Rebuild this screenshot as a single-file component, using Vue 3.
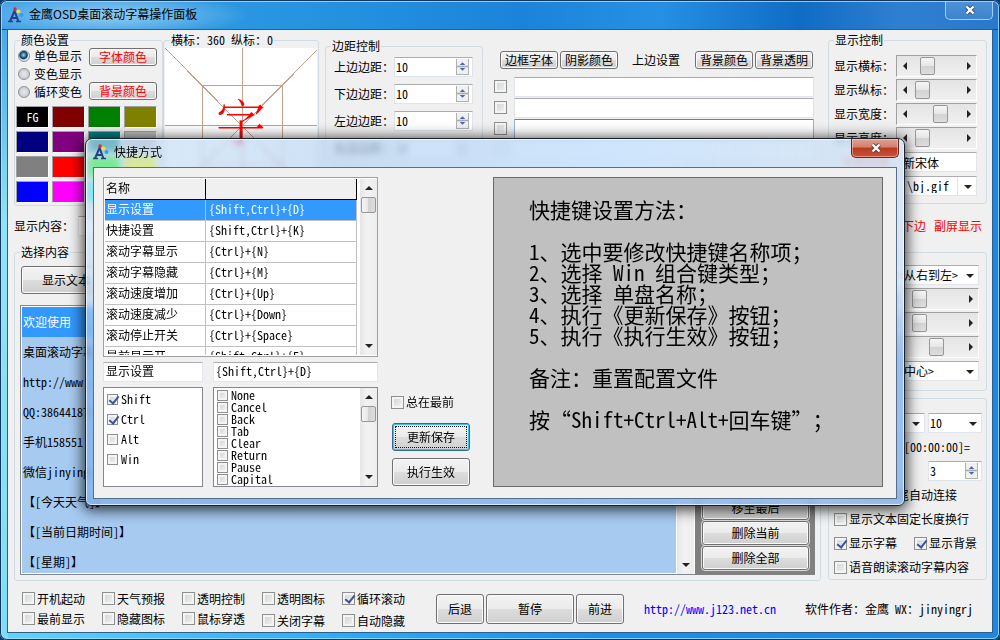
<script setup>
import { ref } from 'vue'

const swatches = [
  '#000000', '#800000', '#008000', '#808000',
  '#000080', '#800080', '#008080', '#c0c0c0',
  '#808080', '#ff0000', '#00ff00', '#ffff00',
  '#0000ff', '#ff00ff', '#00ffff', '#ffffff',
]
const colorMode = ref('单色显示')
const colorModes = ['单色显示', '变色显示', '循环变色']
const margins = ['上边边距：', '下边边距：', '左边边距：', '右边边距：']
const sliders = [
  { label: '显示横标：', value: 6 },
  { label: '显示纵标：', value: 1 },
  { label: '显示宽度：', value: 19 },
  { label: '显示高度：', value: 1 },
]
const speeds = [
  { label: '滚动速度', value: 8 },
  { label: '滚动间隔', value: 8 },
  { label: '停留时间', value: 25 },
]
const lines = [
  '欢迎使用', '桌面滚动字幕', 'http://www.j123.net.cn', 'QQ:386441871', '手机158551',
  '微信jinyingrj', '【[今天天气]】', '【[当前日期时间]】', '【[星期]】',
]
const options = [
  [['开机起动', false], ['最前显示', false]],
  [['天气预报', false], ['隐藏图标', false]],
  [['透明控制', false], ['鼠标穿透', false]],
  [['透明图标', false], ['关闭字幕', false]],
  [['循环滚动', true], ['自动隐藏', false]],
]
const shortcuts = [
  ['显示设置', '{Shift,Ctrl}+{D}'],
  ['快捷设置', '{Shift,Ctrl}+{K}'],
  ['滚动字幕显示', '{Ctrl}+{N}'],
  ['滚动字幕隐藏', '{Ctrl}+{M}'],
  ['滚动速度增加', '{Ctrl}+{Up}'],
  ['滚动速度减少', '{Ctrl}+{Down}'],
  ['滚动停止开关', '{Ctrl}+{Space}'],
  ['最前显示开', '{Shift,Ctrl}+{E}'],
]
const modifiers = [['Shift', true], ['Ctrl', true], ['Alt', false], ['Win', false]]
const keys = ['None', 'Cancel', 'Back', 'Tab', 'Clear', 'Return', 'Pause', 'Capital']
const guide = `快捷键设置方法：

1、选中要修改快捷键名称项；
2、选择 Win 组合键类型；
3、选择 单盘名称；
4、执行《更新保存》按钮；
5、执行《执行生效》按钮；

备注：重置配置文件

按“Shift+Ctrl+Alt+回车键”；`
</script>

<template>
  <main class="window">
    <header class="titlebar">
      <svg class="logo" viewBox="0 0 16 16" aria-hidden="true">
        <path d="M2 14.500 L6.500 4 L10.500 14.500 M4 11 H9" fill="none" stroke="#27408b" stroke-width="2" />
        <path d="M0 14.500 H5 M8 14.500 H13" stroke="#27408b" stroke-width="1.500" />
        <circle cx="7" cy="2" r="1.700" fill="#e8262a" />
        <circle cx="10.500" cy="4.500" r="2" fill="#ffe21a" />
        <circle cx="13.500" cy="8" r="2" fill="#3a9af0" />
      </svg>
      <h1>金鹰OSD桌面滚动字幕操作面板</h1>
      <button class="close" aria-label="关闭">
        <svg viewBox="0 0 12 10"><path d="M2.500 1.500 L9.500 8.500 M9.500 1.500 L2.500 8.500" stroke="#35506e" stroke-width="4" /><path d="M2.500 1.500 L9.500 8.500 M9.500 1.500 L2.500 8.500" stroke="#fff" stroke-width="2.400" /></svg>
      </button>
    </header>

    <div class="client">
      <div class="upper">
        <div class="left">
          <div class="top">
            <fieldset class="colors">
              <legend>颜色设置</legend>
              <div class="modes">
                <div>
                  <label v-for="m in colorModes" :key="m" class="radio">
                    <input v-model="colorMode" type="radio" name="mode" :value="m">{{ m }}
                  </label>
                </div>
                <div class="mode-buttons">
                  <button class="btn red">字体颜色</button>
                  <button class="btn red">背景颜色</button>
                </div>
              </div>
              <div class="swatches">
                <button v-for="(c, i) in swatches" :key="c" :style="{ backgroundColor: c }" :aria-label="c">{{ i ? '' : 'FG' }}</button>
              </div>
            </fieldset>

            <fieldset class="preview">
              <legend>横标：360 纵标：0</legend>
              <svg viewBox="0 0 152 154">
                <rect width="152" height="154" fill="#fff" />
                <g fill="none" stroke="#c8a08c" shape-rendering="crispEdges">
                  <path d="M77.500 0V154M0 77.500H152M0 0L152 154M152 2L2 154" />
                  <rect x="37.500" y="37.500" width="80" height="80" />
                </g>
                <text x="76" y="93" text-anchor="middle">字</text>
              </svg>
            </fieldset>

            <fieldset class="margins">
              <legend>边距控制</legend>
              <label v-for="m in margins" :key="m">{{ m }}
                <span class="spin"><input value="10"><i><svg viewBox="0 0 14 16"><path d="M7 2.500l3.500 3.500h-7zM7 13.500l3.500-3.500h-7z" fill="#4a66b4" /><path d="M0 8H14" stroke="#aaa" stroke-width="2" /></svg></i></span>
              </label>
            </fieldset>

            <section class="borders">
              <div class="border-head">
                <button class="btn">边框字体</button><button class="btn">阴影颜色</button>
                <span>上边设置</span>
                <button class="btn">背景颜色</button><button class="btn">背景透明</button>
              </div>
              <div v-for="n in 4" :key="n" class="border-row">
                <input type="checkbox" :aria-label="'边框' + n">
                <input class="field" :class="{ focus: n === 3 }" :aria-label="'文字' + n">
              </div>
            </section>
          </div>

          <label class="content-row">显示内容：<input class="field"></label>

          <fieldset class="chooser">
            <legend>选择内容</legend>
            <button class="btn text-btn">显示文本</button>
            <div class="list-wrap">
              <ul class="lines">
                <li v-for="(l, i) in lines" :key="l" :class="{ on: i === 0 }">{{ l }}</li>
              </ul>
              <div class="vbar">
                <svg viewBox="0 0 8 4"><path d="M0 4L4 0L8 4z" /></svg><i></i>
                <svg viewBox="0 0 8 4"><path d="M0 0L4 4L8 0z" /></svg>
              </div>
              <div class="list-actions">
                <button class="btn">移至最后</button>
                <button class="btn">删除当前</button>
                <button class="btn">删除全部</button>
              </div>
            </div>
          </fieldset>
        </div>

        <aside class="right">
          <fieldset class="display">
            <legend>显示控制</legend>
            <label v-for="s in sliders" :key="s.label" class="row">{{ s.label }}
              <span class="hbar">
                <svg viewBox="0 0 4 8"><path d="M4 0L0 4L4 8z" /></svg>
                <input type="range" min="0" max="30" :value="s.value">
                <svg viewBox="0 0 4 8"><path d="M0 0L4 4L0 8z" /></svg>
              </span>
            </label>
            <label class="row wide"><span class="red">字体名称</span><input class="field" value="新宋体"></label>
            <label class="row wide">背景图片
              <span class="combo split"><select><option>\bj.gif</option></select><svg viewBox="0 0 8 4"><path d="M0 0L4 4L8 0z" /></svg></span>
            </label>
          </fieldset>
          <p class="screens"><span>下边</span><span>副屏显示</span></p>
          <fieldset class="motion">
            <label class="row">方向
              <span class="combo"><select><option>&lt;从右到左&gt;</option></select><svg viewBox="0 0 8 4"><path d="M0 0L4 4L8 0z" /></svg></span>
            </label>
            <label v-for="s in speeds" :key="s.label" class="row">{{ s.label }}
              <span class="hbar grow">
                <svg viewBox="0 0 4 8"><path d="M4 0L0 4L4 8z" /></svg>
                <input type="range" min="0" max="42" :value="s.value">
                <svg viewBox="0 0 4 8"><path d="M0 0L4 4L0 8z" /></svg>
              </span>
            </label>
            <label class="row">位置
              <span class="combo center"><select><option>&lt;中心&gt;</option></select><svg viewBox="0 0 8 4"><path d="M0 0L4 4L8 0z" /></svg></span>
            </label>
          </fieldset>
          <fieldset class="timing">
            <div class="row end">
              <span class="combo first"><select aria-label="单位"><option></option></select><svg viewBox="0 0 8 4"><path d="M0 0L4 4L8 0z" /></svg></span>
              <span class="combo num"><select aria-label="字号"><option>10</option></select><svg viewBox="0 0 8 4"><path d="M0 0L4 4L8 0z" /></svg></span>
            </div>
            <div class="row end time">[00:00:00]=</div>
            <div class="row end">
              <span class="spin small"><input value="3" aria-label="次数"><i><svg viewBox="0 0 14 16"><path d="M7 2.500l3.500 3.500h-7zM7 13.500l3.500-3.500h-7z" fill="#4a66b4" /><path d="M0 8H14" stroke="#aaa" stroke-width="2" /></svg></i></span>
            </div>
            <label class="row check"><input type="checkbox">字幕的首尾自动连接</label>
            <label class="row check"><input type="checkbox">显示文本固定长度换行</label>
            <div class="row pair">
              <label class="check"><input type="checkbox" checked>显示字幕</label>
              <label class="check"><input type="checkbox" checked>显示背景</label>
            </div>
            <label class="row check"><input type="checkbox">语音朗读滚动字幕内容</label>
          </fieldset>
        </aside>
      </div>

      <footer>
        <div class="options">
          <div v-for="(col, i) in options" :key="i" :class="{ loose: i > 2 }">
            <label v-for="o in col" :key="o[0]" class="check"><input type="checkbox" :checked="o[1]">{{ o[0] }}</label>
          </div>
        </div>
        <div class="player">
          <button class="btn">后退</button><button class="btn big">暂停</button><button class="btn">前进</button>
        </div>
        <a href="http://www.j123.net.cn">http://www.j123.net.cn</a>
        <span class="author">软件作者：金鹰 WX：jinyingrj</span>
      </footer>
    </div>

    <section class="dialog" role="dialog" aria-label="快捷方式">
      <header>
        <svg class="logo" viewBox="0 0 16 16" aria-hidden="true">
          <path d="M2 14.500 L6.500 4 L10.500 14.500 M4 11 H9" fill="none" stroke="#27408b" stroke-width="2" />
          <path d="M0 14.500 H5 M8 14.500 H13" stroke="#27408b" stroke-width="1.500" />
          <circle cx="7" cy="2" r="1.700" fill="#e8262a" />
          <circle cx="10.500" cy="4.500" r="2" fill="#ffe21a" />
          <circle cx="13.500" cy="8" r="2" fill="#3a9af0" />
        </svg>
        <h2>快捷方式</h2>
        <button class="close hot" aria-label="关闭">
          <svg viewBox="0 0 12 10"><path d="M2.500 1.500 L9.500 8.500 M9.500 1.500 L2.500 8.500" stroke="#5c3a3a" stroke-width="4" /><path d="M2.500 1.500 L9.500 8.500 M9.500 1.500 L2.500 8.500" stroke="#fff" stroke-width="2.400" /></svg>
        </button>
      </header>
      <div class="dialog-body">
        <div class="keys">
          <div class="grid-box">
            <div class="table-clip">
              <table>
                <thead><tr><th>名称</th><th></th></tr></thead>
                <tbody>
                  <tr v-for="(s, i) in shortcuts" :key="s[0]" :class="{ on: i === 0 }"><td>{{ s[0] }}</td><td>{{ s[1] }}</td></tr>
                </tbody>
              </table>
            </div>
            <div class="vbar">
              <svg viewBox="0 0 8 4"><path d="M0 4L4 0L8 4z" /></svg><i></i>
              <svg viewBox="0 0 8 4"><path d="M0 0L4 4L8 0z" /></svg>
            </div>
          </div>
          <div class="pair-row">
            <input class="field" value="显示设置" aria-label="名称">
            <input class="field" value="{Shift,Ctrl}+{D}" aria-label="快捷键">
          </div>
          <div class="pair-row lists">
            <div class="box mods">
              <label v-for="m in modifiers" :key="m[0]" class="check"><input type="checkbox" :checked="m[1]">{{ m[0] }}</label>
            </div>
            <div class="box">
              <div class="keylist">
                <label v-for="k in keys" :key="k" class="check"><input type="checkbox">{{ k }}</label>
              </div>
              <div class="vbar">
                <svg viewBox="0 0 8 4"><path d="M0 4L4 0L8 4z" /></svg><i></i>
                <svg viewBox="0 0 8 4"><path d="M0 0L4 4L8 0z" /></svg>
              </div>
            </div>
          </div>
        </div>
        <div class="commands">
          <label class="check"><input type="checkbox">总在最前</label>
          <button class="btn default">更新保存</button>
          <button class="btn">执行生效</button>
        </div>
        <div class="guide">{{ guide }}</div>
      </div>
    </section>
  </main>
</template>

<style>
body { margin: 0; background: #0a3a6e; }
</style>

<style scoped>
* { box-sizing: border-box; }
.window {
  position: relative;
  display: flex;
  flex-direction: column;
  min-height: 100vh;
  padding: 0 8px 8px;
  border-radius: 7px;
  background:
    linear-gradient(#4aa8e8, #8fe3f5 30%, #7fdcf6) 0 30px / 8px 100% no-repeat,
    linear-gradient(90deg, #62d4fa, #2aaaf8 35%, #1a90ee 60%, #1c86e4);
  font: 12px/14px "Noto Sans Mono CJK SC", "Liberation Mono", "Noto Sans CJK SC", monospace;
  color: #000;
  white-space: nowrap;
}
.window::after {
  content: "";
  position: absolute;
  inset: 0;
  border-radius: 7px;
  box-shadow: inset 0 0 0 1px #12385e, inset 0 0 0 2px rgba(170, 222, 250, .8);
  pointer-events: none;
}
button, input, select { font: inherit; color: inherit; margin: 0; }
.titlebar {
  display: flex;
  align-items: center;
  height: 30px;
  margin: 0 -8px;
  padding-left: 8px;
  border-radius: 7px 7px 0 0;
  border-bottom: 1px solid #1f4a72;
  background:
    radial-gradient(ellipse 140px 22px at 110px 15px, rgba(200, 232, 250, .65), transparent),
    linear-gradient(90deg, #3c9fe6, #2694e0 30%, #1b84da 52%, #2590e4 66%, #0f6cc4 80%, #2f7fd0 90%, #2a78cc);
}
.logo { width: 16px; height: 16px; flex: none; }
h1, h2 { margin: 0 0 0 5px; font: 12px/16px "Noto Sans CJK SC", sans-serif; }
h1 { padding-bottom: 1px; }
.close {
  align-self: flex-start;
  display: grid;
  place-items: center;
  width: 48px;
  height: 20px;
  margin-left: auto;
  margin-right: 7px;
  padding: 0 0 0 2px;
  border: 1px solid #a8cdf0;
  border-top: 0;
  border-radius: 0 0 5px 5px;
  background: linear-gradient(#4f93d8, #3c84d0);
}
.close svg { width: 12px; height: 10px; }
.close.hot {
  height: 19px;
  margin-right: -2px;
  border-color: #5c2a28;
  background: linear-gradient(#e0a090, #d4806c 45%, #b83a20 50%, #cc5038);
  box-shadow: inset 0 0 0 1px rgba(255, 220, 210, .5);
}
.client {
  flex: 1;
  display: flex;
  flex-direction: column;
  background: #f0f0f0;
  padding: 3px 5px 0 6px;
  box-shadow: 0 0 0 1px #2c5f8c;
}
.upper { flex: 1; display: flex; gap: 7px; }
.left { flex: 1; min-width: 0; display: flex; flex-direction: column; }
.right { flex: none; width: 159px; }
fieldset {
  min-width: 0;
  margin: 0;
  padding: 0;
  border: 1px solid #d0dce4;
  border-radius: 3px;
}
legend { margin-left: 5px; padding: 0 1px; height: 14px; }
.top { display: flex; align-items: flex-start; }
.colors { width: 149px; padding: 0 5px 2px 1px; }
.colors legend { margin-left: 4px; }
.modes { display: flex; justify-content: space-between; }
.radio { display: flex; align-items: center; gap: 4px; height: 18px; padding-left: 2px; }
.radio input {
  appearance: none;
  width: 12px;
  height: 12px;
  border: 1px solid #8e8f8f;
  border-radius: 50%;
  background: radial-gradient(#e8eaee, #c8ccd2 70%);
}
.radio input:checked { background: radial-gradient(circle at 45% 40%, #8fdcf4 0, #1a5f8c 35%, #103048 45%, #dfe6ea 60%); }
.mode-buttons { display: flex; flex-direction: column; justify-content: space-between; padding: 1px 0; width: 68px; }
.btn {
  height: 18px;
  padding: 0;
  border: 1px solid #707070;
  border-radius: 3px;
  background: linear-gradient(#f3f3f3, #ebebeb 49%, #dddddd 50%, #cfcfcf);
  box-shadow: inset 0 0 0 1px #fbfbfb;
  line-height: 14px;
}
.red { color: #f00; }
.swatches { display: grid; grid-template-columns: repeat(4, 1fr); gap: 3px; margin-top: 5px; }
.swatches button {
  height: 22px;
  padding: 0;
  border: 1px solid;
  border-color: #a0a0a0 #fff #fff #a0a0a0;
  color: #fff;
  line-height: 18px;
}
.preview { width: 156px; padding: 1px 1px 1px; }
.preview svg { display: block; width: 100%; height: 154px; }
.preview text { font-size: 50px; font-weight: 300; font-family: "Noto Serif CJK SC", "Noto Sans CJK SC", serif; fill: #f00; }
.margins { width: 158px; margin: 6px 0 0 6px; }
.margins label { display: flex; align-items: center; height: 27px; padding-left: 8px; }
.spin { display: flex; align-items: center; width: 80px; height: 20px; padding-right: 3px; border: 1px solid #dde4ec; border-top-color: #abadb3; background: #fff; }
.margins .spin { margin: 0 9px 0 auto; }
.spin input { flex: 1; width: 0; padding: 0 1px 1px; border: 0; outline: 0; background: none; height: 16px; }
.spin i { width: 13px; height: 16px; border: 1px solid #b0b0b0; border-top: 0; background: #f0f0f0; display: flex; }
.borders { flex: 1; min-width: 0; padding: 18px 7px 0 11px; }
.border-head { display: flex; gap: 2px; padding-left: 6px; margin-bottom: 8px; }
.border-head .btn { width: 58px; }
.border-head span { margin: 2px 13px 0 12px; }
.border-row { display: flex; gap: 7px; height: 21px; align-items: flex-start; }
.border-row input[type=checkbox] { margin-top: 3px; }
.field {
  flex: 1;
  width: 0;
  height: 20px;
  padding: 0 2px;
  border: 1px solid #e2e5ee;
  border-top-color: #abadb3;
  background: #fff;
  outline: 0;
  border-radius: 1px;
}
.field.focus { border-color: #8fb8dc; border-top-color: #4a88c0; }
input[type=checkbox] {
  appearance: none;
  flex: none;
  position: relative;
  width: 13px;
  height: 13px;
  border: 1px solid #8e8f8f;
  background: linear-gradient(135deg, #cdd2d8, #f4f4f4);
  box-shadow: inset 0 0 0 2px #f4f4f4;
}
input[type=checkbox]:checked::after {
  content: "";
  position: absolute;
  left: 4px;
  top: 0;
  width: 4px;
  height: 8px;
  border: solid #3c549c;
  border-width: 0 2px 2px 0;
  transform: rotate(38deg);
}
.check { display: flex; align-items: center; gap: 2px; }
.content-row { display: flex; align-items: center; height: 20px; margin: 10px 6px 9px 0; }
.content-row .field { margin-left: 4px; }
.chooser { flex: 1; display: flex; flex-direction: column; padding: 7px 5px 5px; }
.chooser legend, .display legend { margin-left: 0; }
.text-btn { width: 90px; height: 28px; margin: 0 0 11px 1px; }
.list-wrap { flex: 1; display: flex; border: 1px solid #828790; background: #fff; }
.lines { flex: 1; margin: 1px; padding: 0; list-style: none; background: #a6caf0; }
.lines li { height: 30px; padding-left: 1px; line-height: 30px; }
.lines li:last-child { height: 23px; }
.lines li.on { background: #39f; color: #fff; }
.vbar {
  flex: none;
  width: 17px;
  display: flex;
  flex-direction: column;
  align-items: center;
  padding: 7px 0;
  background: linear-gradient(90deg, #e6e6e6, #f2f2f2 40%, #ededed);
}
.vbar svg { width: 8px; height: 4px; }
.vbar i {
  width: 15px;
  height: 16px;
  margin: 7px 0 auto;
  border: 1px solid #979797;
  border-radius: 2px;
  background: linear-gradient(90deg, #f5f5f5, #e6e6e6 49%, #d2d2d2 50%, #dedede);
}
.list-wrap .vbar { margin-right: 2px; }
.list-actions { width: 120px; margin: -1px; padding: 0 6px 5px 7px; display: flex; flex-direction: column; justify-content: flex-end; gap: 1px; background: #808080; }
.list-actions .btn { height: 24px; outline: 1px solid #dcdcdc; }
.display { padding: 7px 9px 5px 5px; }
.row { display: flex; align-items: center; height: 24px; }
.hbar {
  flex: none;
  display: flex;
  align-items: center;
  width: 81px;
  height: 22px;
  margin-left: auto;
  padding: 0 5px 0 6px;
  border: 1px solid;
  border-color: #a0a0a0 #fff #fff #a0a0a0;
  background: linear-gradient(#e4e4e4, #f0f0f0);
}
.hbar.grow { width: 93px; }
.hbar svg { width: 4px; height: 8px; }
.hbar input { appearance: none; flex: 1; width: 0; height: 18px; margin: 0 8px 0 7px; background: none; }
.hbar input::-webkit-slider-thumb {
  appearance: none;
  width: 15px;
  height: 18px;
  border: 1px solid #979797;
  border-radius: 2px;
  background: linear-gradient(#f5f5f5, #e6e6e6 49%, #d2d2d2 50%, #dedede);
}
.row.wide { gap: 10px; padding-left: 8px; }
.row.wide .field { padding-left: 2px; }
.combo { position: relative; display: flex; align-items: center; flex: 1; height: 20px; margin-left: 12px; border: 1px solid #e2e5ee; border-top-color: #abadb3; background: #fff; }
.row.wide .combo { margin-left: 0; }
.combo select { appearance: none; flex: 1; width: 0; height: 18px; padding: 0 0 0 1px; border: 0; background: none; outline: 0; }
.combo svg { position: absolute; right: 4px; top: 8px; width: 8px; height: 4px; pointer-events: none; }
.combo.split select { margin-right: 18px; border-right: 1px solid #dde4ec; padding-left: 6px; }
.screens { display: flex; gap: 8px; justify-content: flex-end; align-items: center; height: 48px; margin: 0 5px 0 0; padding-bottom: 5px; color: #f00; }
.motion { padding: 10px 7px 7px 5px; }
.motion .combo { margin-left: 38px; }
.timing { margin-top: 7px; padding: 12px 4px 0 5px; }
.row.end { justify-content: flex-end; gap: 3px; }
.combo.first { flex: none; width: 60px; }
.combo.num { flex: none; width: 54px; margin: 0; }
.time { padding-right: 12px; }
.spin.small { width: 54px; }
.row.pair { justify-content: space-between; padding-right: 5px; }
footer { display: flex; align-items: center; height: 51px; padding: 4px 0 0 8px; }
.options { display: flex; gap: 16px; }
.options label { width: 64px; height: 20px; }
.options .loose label + label { margin-top: 2px; }
.options .loose { margin-bottom: -2px; }
.player { display: flex; gap: 2px; margin-left: 30px; }
.player .btn { width: 48px; height: 30px; }
.player .btn.big { width: 88px; }
footer a { margin-left: 20px; color: #00f; text-decoration: none; }
.author { margin: 0 14px 0 auto; }
svg path:not([stroke]):not([fill]) { fill: #222; }

.dialog {
  position: absolute;
  left: 85px;
  top: 138px;
  right: 95px;
  padding: 0 7px 6px;
  border: 1px solid #18222e;
  border-radius: 7px 7px 6px 6px;
  background:
    linear-gradient(transparent 40%, rgba(110, 165, 235, .6) 60%),
    linear-gradient(100deg, rgba(196, 222, 246, .6), rgba(184, 212, 242, .7) 30%, rgba(200, 226, 252, .9) 60%, rgba(210, 224, 240, .75));
  backdrop-filter: blur(3px);
  box-shadow: inset 0 0 0 1px rgba(255, 255, 255, .7), 0 2px 14px 2px rgba(0, 0, 0, .75);
}
.dialog > header { display: flex; align-items: center; height: 28px; padding-bottom: 2px; }
.dialog-body {
  display: flex;
  padding: 9px 13px 11px 9px;
  background: #f0f0f0;
  border: 1px solid #56708c;
}
.keys { width: 275px; flex: none; }
.grid-box { display: flex; height: 180px; padding: 1px 0; border: 1px solid #a0a0a0; background: #fff; overflow: hidden; }
.table-clip { flex: 1; overflow: hidden; margin: 0 3px 0 1px; }
.grid-box .vbar, .box .vbar { height: 100%; }
table { width: 100%; border-collapse: separate; border-spacing: 0; table-layout: fixed; }
th { height: 21px; padding: 0 2px 3px 1px; text-align: left; font-weight: normal; background: #f0f0f0; border: solid #000; border-width: 0 1px 1px 0; }
th:first-child { width: 101px; }
td { height: 21px; padding: 0 2px 3px 1px; border: solid #c0c0c0; border-width: 0 1px 1px 0; }
td + td { padding-left: 3px; }
tr.on td { background: #39f; color: #fff; }
.pair-row { display: grid; grid-template-columns: 100px 1fr; gap: 10px; margin-top: 5px; }
.pair-row .field { width: 100%; padding-bottom: 3px; }
.box { display: flex; height: 100px; border: 1px solid #828790; background: #fff; overflow: hidden; }
.mods { flex-direction: column; padding: 1px 3px; }
.mods .check { height: 20px; gap: 3px; }
.mods input[type=checkbox], .keylist input[type=checkbox] { width: 11px; height: 11px; }
.mods input[type=checkbox]:checked::after { left: 3px; top: -1px; }
.keylist { flex: 1; padding: 1px 3px; }
.keylist .check { height: 12px; gap: 3px; line-height: 12px; }
.commands { flex: none; width: 79px; margin: 0 23px 0 13px; display: flex; flex-direction: column; justify-content: flex-end; padding-bottom: 1px; }
.commands .btn { height: 28px; margin-left: 1px; }
.commands .check { margin-bottom: 14px; }
.commands .default { margin-bottom: 7px; border-color: #2a7090; box-shadow: inset 0 0 0 1px #3cc0f0; outline: 1px dotted #111; outline-offset: -4px; }
.guide { flex: 1; padding: 21px 0 0 35px; border: 1px solid #696969; background: #c0c0c0; font-size: 21px; line-height: 21px; white-space: pre; overflow: hidden; text-spacing-trim: space-all; }
</style>
